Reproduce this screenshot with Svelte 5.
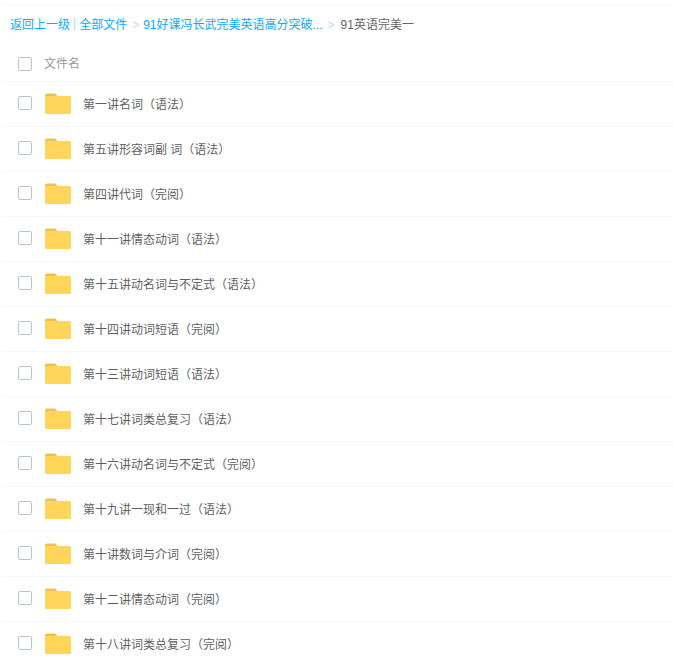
<script>
  const folders = [
    "第一讲名词（语法）",
    "第五讲形容词副 词（语法）",
    "第四讲代词（完阅）",
    "第十一讲情态动词（语法）",
    "第十五讲动名词与不定式（语法）",
    "第十四讲动词短语（完阅）",
    "第十三讲动词短语（语法）",
    "第十七讲词类总复习（语法）",
    "第十六讲动名词与不定式（完阅）",
    "第十九讲一现和一过（语法）",
    "第十讲数词与介词（完阅）",
    "第十二讲情态动词（完阅）",
    "第十八讲词类总复习（完阅）"
  ];
</script>

<div class="page">
  <div class="crumbs">
    <span class="link">返回上一级</span>
    <span class="bar">|</span>
    <span class="link">全部文件</span>
    <span class="sep">&gt;</span>
    <span class="link">91好课冯长武完美英语高分突破...</span>
    <span class="sep last">&gt;</span>
    <span class="current">91英语完美一</span>
  </div>

  <div class="head">
    <span class="check"></span>
    <span class="head-name">文件名</span>
  </div>

  {#each folders as name}
    <div class="row">
      <span class="check"></span>
      <svg class="folder" width="28" height="22" viewBox="0 0 28 22">
        <path d="M1 3.5a2 2 0 0 1 2-2h7.5a2 2 0 0 1 1.6.8L14 5H1z" fill="#f0bf52"/>
        <rect x="1" y="4" width="26" height="18" rx="1.5" fill="#ffd659"/>
      </svg>
      <span class="name">{name}</span>
    </div>
  {/each}
</div>

<style>
  :global(body) {
    background: #fff;
    overflow: hidden;
  }

  .page {
    height: 660px;
    overflow: hidden;
    padding-top: 4px;
    box-sizing: border-box;
    font-family: "Liberation Sans", "Noto Sans CJK SC", sans-serif;
    font-size: 12px;
  }

  .crumbs {
    display: flex;
    align-items: center;
    height: 36px;
    margin-left: 2px;
    padding-left: 8px;
    border-top: 1px solid #f4f5f7;
    white-space: pre;
  }

  .link {
    color: #09aaff;
  }

  .bar {
    color: #a8d8f5;
    margin: 0 3px;
  }

  .sep {
    color: #c5d8f0;
    margin: 4px 4px 0 5px;
  }

  .sep.last {
    margin-right: 6px;
  }

  .current {
    color: #666;
  }

  .head {
    display: flex;
    align-items: center;
    height: 34px;
    margin-left: 2px;
    padding: 6px 0 0 16px;
    border-bottom: 1px solid #f4f6fa;
  }

  .head-name {
    margin: 0 0 4px 12px;
    color: #999;
  }

  .row {
    display: flex;
    align-items: center;
    height: 42px;
    margin-left: 2px;
    padding: 0 0 2px 16px;
    border-bottom: 1px solid #f4f6fa;
  }

  .check {
    flex: none;
    width: 12px;
    height: 12px;
    border: 1px solid #b8c4d4;
    border-radius: 2px;
  }

  .folder {
    flex: none;
    margin-left: 12px;
  }

  .name {
    margin-left: 11px;
    color: #5f5f5f;
  }
</style>
